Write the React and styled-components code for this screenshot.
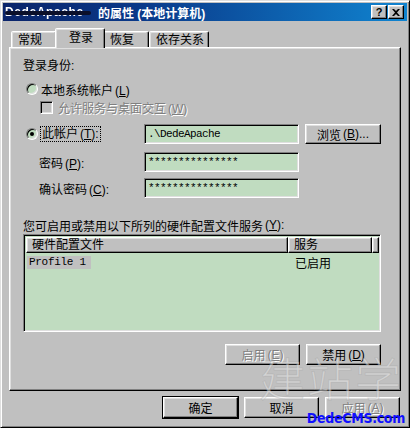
import styled, { createGlobalStyle } from "styled-components";

const GlobalStyle = createGlobalStyle`
  html, body {
    margin: 0;
    padding: 0;
    background: #c0c0c0;
  }
  body {
    font-family: "Liberation Sans", "Noto Sans CJK SC", sans-serif;
    font-size: 12px;
    color: #000;
  }
`;

const ui = `"Liberation Sans", "Noto Sans CJK SC", sans-serif`;

const raised = `
  border: 1px solid;
  border-color: #fff #000 #000 #fff;
  box-shadow: inset -1px -1px #808080, inset 1px 1px #dfdfdf;
`;

const sunken = `
  border: 1px solid;
  border-color: #808080 #fff #fff #808080;
  box-shadow: inset 1px 1px #000, inset -1px -1px #dfdfdf;
`;

const Window = styled.div`
  position: relative;
  width: 410px;
  height: 428px;
  box-sizing: border-box;
  background: #c0c0c0;
  border: 1px solid;
  border-color: #dfdfdf #000 #000 #dfdfdf;
  box-shadow: inset 1px 1px #fff, inset -1px -1px #808080;
  padding: 2px;
  display: flex;
  flex-direction: column;
  overflow: hidden;
`;

const TitleBar = styled.div`
  height: 18px;
  display: flex;
  align-items: center;
  justify-content: space-between;
  padding: 0 3px 0 2px;
  background: linear-gradient(90deg, #0a246a 0%, #0a3a8a 35%, #1084d0 100%);
`;

const TitleText = styled.div`
  color: #fff;
  font-weight: bold;
  font-size: 12px;
  font-family: ${ui};
  display: flex;
  align-items: center;
  gap: 5px;
  white-space: nowrap;
`;

const Hidden = styled.span`
  position: relative;
  width: 88px;
  color: #fff;
  letter-spacing: 0.6px;
  filter: blur(0.5px);
  &::after {
    content: "";
    position: absolute;
    left: 0;
    right: 2px;
    top: 6px;
    height: 4px;
    background: #0a0f2a;
    border-radius: 2px;
  }
`;

const TitleButtons = styled.div`
  display: flex;
  gap: 1px;
`;

const CapButton = styled.div`
  width: 16px;
  height: 14px;
  box-sizing: border-box;
  background: #c0c0c0;
  ${raised}
  display: flex;
  align-items: center;
  justify-content: center;
  font-family: "Liberation Sans", sans-serif;
  font-weight: bold;
  font-size: 11px;
  line-height: 1;
`;

const Body = styled.div`
  display: flex;
  flex-direction: column;
  padding: 7px 6px 0 6px;
`;

const TabRow = styled.div`
  display: flex;
  align-items: flex-end;
  height: 19px;
  padding-left: 2px;
  position: relative;
  z-index: 1;
`;

const Tab = styled.div`
  box-sizing: border-box;
  width: ${(p) => p.$w}px;
  height: ${(p) => (p.$active ? 20 : 16)}px;
  margin: ${(p) => (p.$active ? "0 -2px -1px -2px" : "0")};
  padding: ${(p) => (p.$active ? "2px 0 0 13px" : "1px 0 0 6px")};
  background: #c0c0c0;
  border: 1px solid;
  border-bottom: none;
  border-color: #fff #000 transparent #fff;
  border-radius: 2px 2px 0 0;
  box-shadow: inset -1px 0 #808080, inset 1px 1px #dfdfdf;
  font-family: ${ui};
  font-size: 12px;
  line-height: 14px;
  white-space: nowrap;
  position: relative;
  z-index: ${(p) => (p.$active ? 2 : 0)};
`;

const Panel = styled.div`
  box-sizing: border-box;
  height: 344px;
  border: 1px solid;
  border-color: #fff #000 #000 #fff;
  box-shadow: inset -1px -1px #808080, inset 1px 1px #dfdfdf;
  padding: 9px 19px 0 13px;
  display: flex;
  flex-direction: column;
  font-family: ${ui};
`;

const Key = styled.span`
  font-family: "Liberation Sans", sans-serif;
  margin-left: 2px;
`;

const Line = styled.div`
  display: flex;
  align-items: center;
  height: ${(p) => p.$h || 16}px;
  margin-top: ${(p) => p.$mt || 0}px;
  padding-left: ${(p) => p.$indent || 0}px;
  gap: ${(p) => p.$gap || 0}px;
  color: ${(p) => (p.$disabled ? "#808080" : "#000")};
  text-shadow: ${(p) => (p.$disabled ? "1px 1px #fff" : "none")};
  white-space: nowrap;
`;

const Radio = styled.span`
  width: 12px;
  height: 12px;
  box-sizing: border-box;
  border-radius: 50%;
  background: #c0dcc0;
  border: 1px solid;
  border-color: #808080 #fff #fff #808080;
  box-shadow: inset 1px 1px #000, inset -1px -1px #dfdfdf;
  display: flex;
  align-items: center;
  justify-content: center;
  flex-shrink: 0;
  &::after {
    content: "";
    width: 4px;
    height: 4px;
    border-radius: 50%;
    background: ${(p) => (p.$checked ? "#000" : "transparent")};
  }
`;

const Check = styled.span`
  width: 13px;
  height: 13px;
  box-sizing: border-box;
  background: #c0c0c0;
  ${sunken}
  flex-shrink: 0;
`;

const Focus = styled.span`
  outline: 1px dotted #000;
  outline-offset: 0;
  padding: 0 1px;
  line-height: 14px;
`;

const FieldRow = styled.div`
  display: grid;
  grid-template-columns: 115px 155px 76px;
  column-gap: 6px;
  align-items: center;
  height: 20px;
  margin-top: ${(p) => p.$mt || 0}px;
  white-space: nowrap;
`;

const FieldLabel = styled.div`
  display: flex;
  align-items: center;
  gap: 3px;
  padding-left: ${(p) => p.$indent || 0}px;
`;

const Input = styled.div`
  box-sizing: border-box;
  height: 20px;
  background: #c0dcc0;
  ${sunken}
  padding: 0 3px;
  display: flex;
  align-items: center;
  font-family: "Liberation Mono", monospace;
  font-size: 11px;
  letter-spacing: -0.6px;
`;

const Button = styled.div`
  box-sizing: border-box;
  width: ${(p) => p.$w || 75}px;
  height: ${(p) => p.$h || 21}px;
  background: #c0c0c0;
  ${raised}
  ${(p) =>
    p.$default &&
    `outline: 1px solid #000; outline-offset: 0; border-color: #fff #000 #000 #fff;`}
  display: flex;
  align-items: center;
  justify-content: center;
  font-family: ${ui};
  font-size: 12px;
  color: ${(p) => (p.$disabled ? "#808080" : "#000")};
  text-shadow: ${(p) => (p.$disabled ? "1px 1px #fff" : "none")};
  white-space: nowrap;
`;

const ListBox = styled.div`
  box-sizing: border-box;
  height: 98px;
  margin-top: 2px;
  background: #c0dcc0;
  ${sunken}
  padding: 2px;
  display: flex;
  flex-direction: column;
`;

const Header = styled.div`
  display: grid;
  grid-template-columns: 262px 84px 1fr;
  height: 16px;
  background: #c0c0c0;
`;

const HeadCell = styled.div`
  box-sizing: border-box;
  ${raised}
  padding-left: 5px;
  display: flex;
  align-items: center;
  font-size: 12px;
  line-height: 14px;
`;

const ListRow = styled.div`
  display: grid;
  grid-template-columns: 262px 84px 1fr;
  height: 14px;
  margin-top: 1px;
  align-items: center;
`;

const Selected = styled.span`
  justify-self: start;
  margin-left: 1px;
  width: 62px;
  padding-left: 2px;
  background: #c0c0c0;
  font-family: "Liberation Mono", monospace;
  font-size: 11px;
  letter-spacing: -0.3px;
  line-height: 13px;
`;

const Status = styled.span`
  padding-left: 7px;
  font-size: 12px;
`;

const ButtonRow = styled.div`
  display: flex;
  justify-content: flex-end;
  gap: 6px;
  margin-top: ${(p) => p.$mt || 0}px;
  padding-right: ${(p) => p.$pr || 0}px;
`;

const Watermark = styled.div`
  position: absolute;
  right: 6px;
  bottom: 28px;
  font-family: "Noto Sans CJK SC", sans-serif;
  font-size: 46px;
  line-height: 1;
  font-weight: 300;
  letter-spacing: 2px;
  color: rgba(235, 235, 235, 0.5);
  -webkit-text-stroke: 1px rgba(150, 150, 150, 0.3);
  pointer-events: none;
`;

const Brand = styled.div`
  position: absolute;
  right: 4px;
  bottom: 1px;
  font-family: "DejaVu Sans Condensed", "DejaVu Sans", sans-serif;
  font-weight: bold;
  font-size: 14px;
  color: #1010ff;
  letter-spacing: -0.3px;
  pointer-events: none;
`;

export default function App() {
  return (
    <>
      <GlobalStyle />
      <Window>
        <TitleBar>
          <TitleText>
            <Hidden>DedeApache</Hidden>
            <span>的属性 (本地计算机)</span>
          </TitleText>
          <TitleButtons>
            <CapButton>?</CapButton>
            <CapButton>
              <svg width="8" height="7" viewBox="0 0 8 7">
                <path d="M0 0h2l2 2 2-2h2L5 3.5 8 7H6L4 5 2 7H0l3-3.5z" fill="#000" />
              </svg>
            </CapButton>
          </TitleButtons>
        </TitleBar>

        <Body>
          <TabRow>
            <Tab $w={46}>常规</Tab>
            <Tab $w={50} $active>登录</Tab>
            <Tab $w={46}>恢复</Tab>
            <Tab $w={60}>依存关系</Tab>
          </TabRow>

          <Panel>
            <Line $h={14}>登录身份:</Line>
            <Line $mt={10} $indent={3} $gap={3}>
              <Radio />
              <span>本地系统帐户<Key>(<u>L</u>)</Key></span>
            </Line>
            <Line $mt={2} $indent={17} $gap={5} $disabled>
              <Check />
              <span>允许服务与桌面交互<Key>(<u>W</u>)</Key></span>
            </Line>

            <FieldRow $mt={9}>
              <FieldLabel $indent={3}>
                <Radio $checked />
                <Focus>此帐户<Key>(<u>T</u>):</Key></Focus>
              </FieldLabel>
              <Input>.\DedeApache</Input>
              <Button $w={76} $h={20}>
                浏览<Key>(<u>B</u>)...</Key>
              </Button>
            </FieldRow>
            <FieldRow $mt={8}>
              <FieldLabel $indent={16}>
                <span>密码<Key>(<u>P</u>):</Key></span>
              </FieldLabel>
              <Input>***************</Input>
            </FieldRow>
            <FieldRow $mt={6}>
              <FieldLabel $indent={16}>
                <span>确认密码<Key>(<u>C</u>):</Key></span>
              </FieldLabel>
              <Input>***************</Input>
            </FieldRow>

            <Line $h={14} $mt={20}>
              您可启用或禁用以下所列的硬件配置文件服务<Key>(<u>Y</u>):</Key>
            </Line>
            <ListBox>
              <Header>
                <HeadCell>硬件配置文件</HeadCell>
                <HeadCell>服务</HeadCell>
                <HeadCell />
              </Header>
              <ListRow>
                <Selected>Profile 1</Selected>
                <Status>已启用</Status>
              </ListRow>
            </ListBox>

            <ButtonRow $mt={12}>
              <Button $disabled>
                启用<Key>(<u>E</u>)</Key>
              </Button>
              <Button>
                禁用<Key>(<u>D</u>)</Key>
              </Button>
            </ButtonRow>
          </Panel>

          <ButtonRow $mt={6} $pr={1}>
            <Button $default>确定</Button>
            <Button>取消</Button>
            <Button $disabled>
              应用<Key>(<u>A</u>)</Key>
            </Button>
          </ButtonRow>
        </Body>

        <Watermark>建站学</Watermark>
        <Brand>DedeCMS.com</Brand>
      </Window>
    </>
  );
}
